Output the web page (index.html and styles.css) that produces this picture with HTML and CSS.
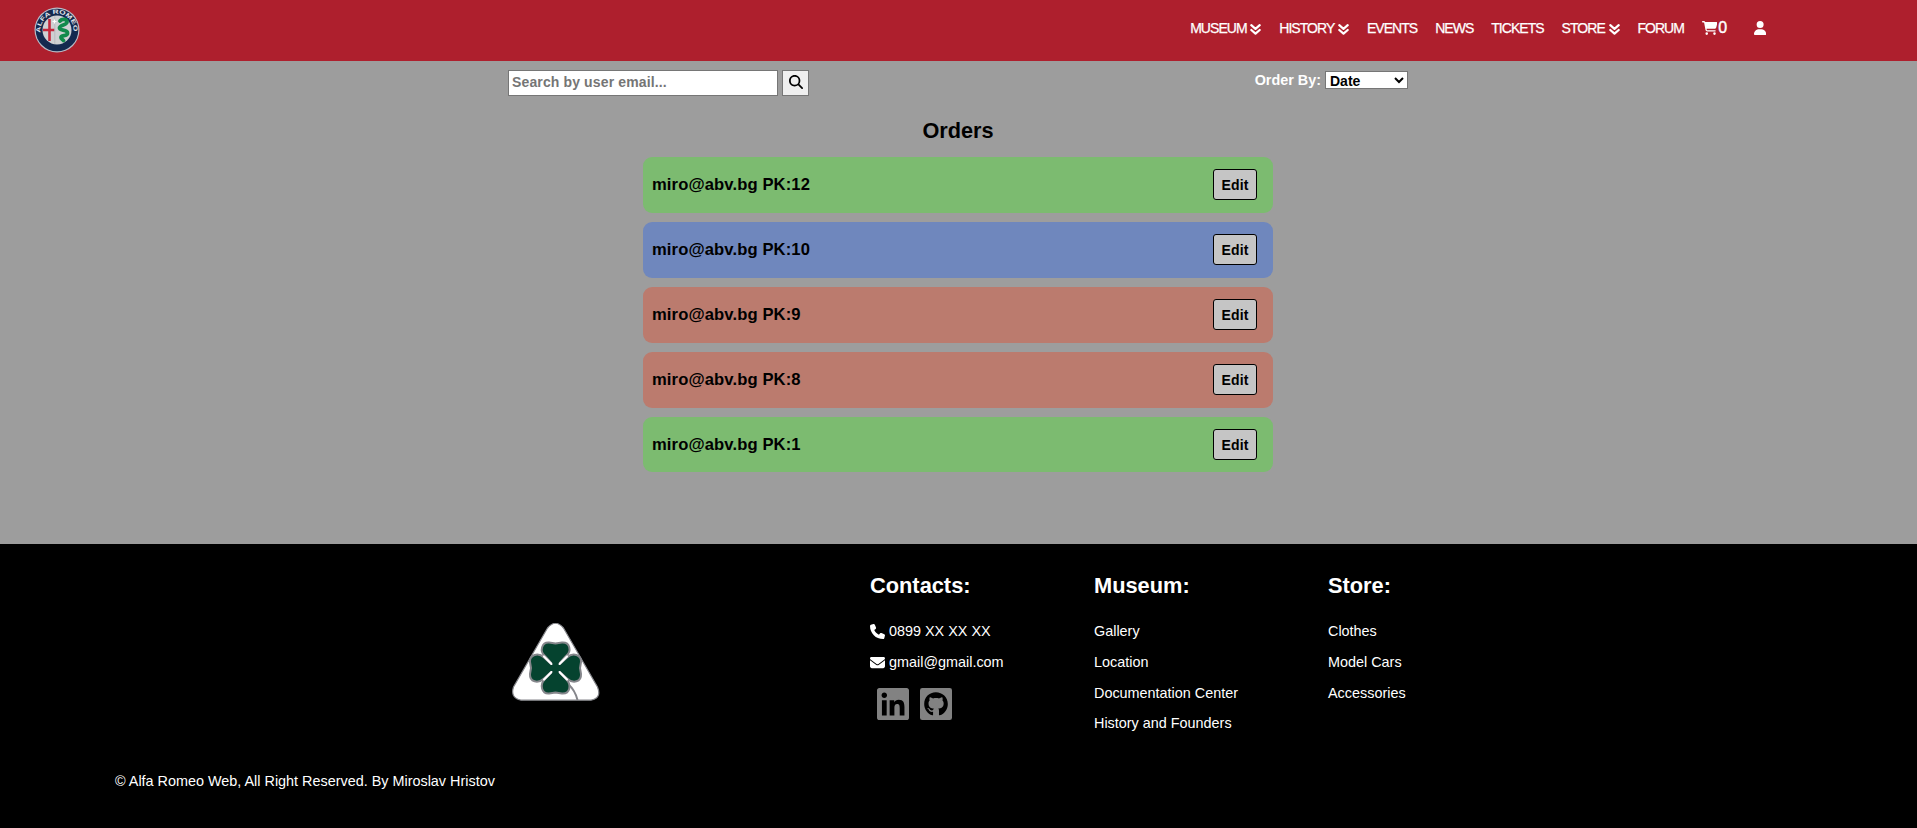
FILE: index.html
```html
<!DOCTYPE html>
<html lang="en">
<head>
<meta charset="utf-8">
<title>Orders</title>
<link rel="stylesheet" href="styles.css">
</head>
<body>
<svg class="defs" width="0" height="0">
  <symbol id="angles" viewBox="0 0 11 11"><path d="M1.3 1.2 5.5 4.8 9.7 1.2M1.3 6 5.5 9.6 9.7 6" fill="none" stroke="currentColor" stroke-width="2.2" stroke-linecap="round" stroke-linejoin="round"/></symbol>
</svg>
<header class="header">
  <a class="logo">
    <svg viewBox="0 0 46 46" width="46" height="46">
      <defs><path id="ring" d="M7.2 28.5A16.6 16.6 0 1 1 38.8 28.5"/></defs>
      <circle cx="23" cy="23" r="22.5" fill="#b9bcc6"/>
      <circle cx="23" cy="23" r="21.3" fill="#14294f"/>
      <circle cx="23" cy="23" r="14.500" fill="#cfd0d3"/>
      <path d="M15.500 12v22M9 23h11.500" stroke="#c5273b" stroke-width="2.600"/>
      <path d="M20.800 9.200v27.600" stroke="#b4b6ba" stroke-width=".8"/>
      <path d="M18.500 14.500h4M20.500 12.500v4" stroke="#fff" stroke-width="1.200"/>
      <path d="M26 14c2-2.500 7-2 7 1s-7.500 3-7.500 6 8 1 8 5-6.500 1.500-6.500 4.500c0 1.500 1.500 1.500 2.500 3" fill="none" stroke="#118a4c" stroke-width="3.800" stroke-linecap="round"/>
      <text class="logo-text"><textPath href="#ring" startOffset="3" textLength="55" lengthAdjust="spacingAndGlyphs">ALFA ROMEO</textPath></text>
    </svg>
  </a>
  <nav class="nav">
    <a>MUSEUM<svg class="angles"><use href="#angles"/></svg></a>
    <a>HISTORY<svg class="angles"><use href="#angles"/></svg></a>
    <a>EVENTS</a>
    <a>NEWS</a>
    <a>TICKETS</a>
    <a>STORE<svg class="angles"><use href="#angles"/></svg></a>
    <a>FORUM</a>
    <a class="cart"><svg viewBox="0 0 576 512" width="15.500" height="14"><path fill="currentColor" d="M0 24C0 10.700 10.700 0 24 0H69.500c22 0 41.500 12.800 50.600 32h411c26.300 0 45.500 25 38.600 50.400l-41 152.300c-8.500 31.400-37 53.300-69.500 53.300H170.700l5.400 28.500c2.200 11.300 12.100 19.500 23.600 19.500H488c13.300 0 24 10.700 24 24s-10.700 24-24 24H199.700c-34.600 0-64.300-24.600-70.700-58.500L77.400 54.500c-.7-3.800-4-6.500-7.900-6.500H24C10.700 48 0 37.300 0 24zM128 464a48 48 0 1 1 96 0 48 48 0 1 1 -96 0zm336-48a48 48 0 1 1 0 96 48 48 0 1 1 0-96z"/></svg><span>0</span></a>
    <a class="user"><svg viewBox="0 0 448 512" width="12.250" height="14"><path fill="currentColor" d="M224 256A128 128 0 1 0 224 0a128 128 0 1 0 0 256zm-45.700 48C79.800 304 0 383.800 0 482.300C0 498.700 13.300 512 29.700 512H418.300c16.400 0 29.700-13.300 29.700-29.700C448 383.800 368.200 304 269.700 304H178.300z"/></svg></a>
  </nav>
</header>

<main class="main">
  <div class="tools">
    <form class="search">
      <input class="search-input" type="text" placeholder="Search by user email...">
      <button class="search-button" type="button"><svg viewBox="0 0 512 512" width="14" height="14"><path d="M416 208c0 45.900-14.900 88.300-40 122.700L502.600 457.400c12.500 12.500 12.500 32.800 0 45.300s-32.800 12.500-45.300 0L330.700 376c-34.400 25.200-76.800 40-122.700 40C93.100 416 0 322.900 0 208S93.100 0 208 0S416 93.100 416 208zM208 352a144 144 0 1 0 0-288 144 144 0 1 0 0 288z"/></svg></button>
    </form>
    <label class="order-by">Order By:
      <select class="order-select"><option>Date</option></select>
    </label>
  </div>
  <h2 class="title">Orders</h2>
  <ul class="orders">
    <li class="order done"><span>miro@abv.bg PK:12</span><button class="edit">Edit</button></li>
    <li class="order sent"><span>miro@abv.bg PK:10</span><button class="edit">Edit</button></li>
    <li class="order pending"><span>miro@abv.bg PK:9</span><button class="edit">Edit</button></li>
    <li class="order pending"><span>miro@abv.bg PK:8</span><button class="edit">Edit</button></li>
    <li class="order done"><span>miro@abv.bg PK:1</span><button class="edit">Edit</button></li>
  </ul>
</main>

<footer class="footer">
  <div class="columns">
    <svg class="clover" viewBox="0 0 88 78" width="88" height="78">
      <path d="M35.500 5Q43.500-4.500 51.500 5L85.500 64Q90 75 79 77.200H9Q-2 75 1.500 64Z" fill="#fff" stroke="#85868b" stroke-width="1.200"/>
      <path d="M56 61Q63 67 65.500 77" fill="none" stroke="#85868b" stroke-width="2"/>
      <g fill="#05432f" stroke="#85868b" stroke-width="2" stroke-linejoin="round">
        <path d="M43.500 45 33 33C27 28 30 19 37 19.500L43.500 20.500 50 19.500C58 19 60 28 54 33Z"/>
        <path d="M43.500 45 33 56C27 62 30 71 37 70.500L43.500 69.500 50 70.500C58 71 60 62 54 56Z"/>
        <path d="M43.500 45 32 34.500C26 29 17.500 32 18 39L19 45 18 51C17.500 59 26 61 32 55.500Z"/>
        <path d="M43.500 45 55 34.500C61 29 69.500 32 69 39L68 45 69 51C69.500 59 61 61 55 55.500Z"/>
      </g>
      <path d="M32 33.500 39.500 41M55 33.500 47.500 41M32 56.500 39.500 49M55 56.500 47.500 49" stroke="#fff" stroke-width="2.200" stroke-linecap="round"/>
      <path d="M43.500 39v12M38 45h11" stroke="#05432f" stroke-width="6"/>
    </svg>
    <section class="column contacts">
      <h3>Contacts:</h3>
      <p><svg viewBox="0 0 512 512" width="15" height="15"><path fill="currentColor" d="M164.900 24.600c-7.700-18.600-28-28.500-47.400-23.200l-88 24C12.100 30.200 0 46 0 64C0 311.400 200.600 512 448 512c18 0 33.800-12.100 38.600-29.500l24-88c5.300-19.400-4.600-39.700-23.200-47.400l-96-40c-16.300-6.800-35.200-2.100-46.300 11.600L304.700 368C234.300 334.700 177.300 277.700 144 207.300L193.300 167c13.700-11.200 18.400-30 11.600-46.300l-40-96z"/></svg> 0899 XX XX XX</p>
      <p><svg viewBox="0 0 512 512" width="15" height="15"><path fill="currentColor" d="M48 64C21.500 64 0 85.500 0 112c0 15.100 7.100 29.300 19.200 38.400L236.800 313.600c11.400 8.500 27 8.500 38.400 0L492.800 150.400c12.100-9.100 19.200-23.300 19.200-38.400c0-26.500-21.500-48-48-48H48zM0 176V384c0 35.300 28.700 64 64 64H448c35.300 0 64-28.700 64-64V176L294.400 339.200c-22.800 17.100-54 17.100-76.800 0L0 176z"/></svg> gmail@gmail.com</p>
      <div class="social">
        <svg viewBox="0 32 448 448" width="32" height="32"><path fill="currentColor" d="M416 32H31.900C14.300 32 0 46.500 0 64.300v383.400C0 465.500 14.300 480 31.900 480H416c17.600 0 32-14.500 32-32.300V64.300c0-17.800-14.400-32.300-32-32.300zM135.400 416H69V202.200h66.500V416zm-33.200-243c-21.300 0-38.500-17.300-38.500-38.500S80.900 96 102.200 96c21.200 0 38.500 17.300 38.500 38.500 0 21.300-17.200 38.500-38.500 38.500zm282.100 243h-66.400V312c0-24.800-.5-56.700-34.500-56.700-34.600 0-39.900 27-39.900 54.900V416h-66.400V202.200h63.700v29.200h.9c8.900-16.800 30.600-34.500 62.900-34.500 67.200 0 79.700 44.300 79.700 101.900V416z"/></svg>
        <svg viewBox="0 0 32 32" width="32" height="32"><rect width="32" height="32" rx="2.300" fill="currentColor"/><path transform="translate(4.200 3.900) scale(.0476)" d="M244.800 8C106.100 8 0 113.300 0 252c0 110.900 69.800 205.800 169.500 239.200 12.800 2.300 17.300-5.600 17.300-12.100 0-6.200-.3-40.400-.3-61.400 0 0-70 15-84.700-29.800 0 0-11.400-29.100-27.800-36.600 0 0-22.900-15.700 1.600-15.400 0 0 24.900 2 38.600 25.800 21.900 38.600 58.600 27.500 72.900 20.900 2.300-16 8.800-27.100 16-33.700-55.900-6.200-112.300-14.300-112.300-110.500 0-27.500 7.600-41.300 23.600-58.900-2.600-6.500-11.100-33.300 2.600-67.900 20.900-6.500 69 27 69 27 20-5.600 41.500-8.500 62.800-8.500s42.800 2.900 62.800 8.500c0 0 48.100-33.600 69-27 13.700 34.700 5.200 61.400 2.600 67.900 16 17.700 25.800 31.500 25.800 58.900 0 96.500-58.900 104.200-114.800 110.500 9.200 7.900 17 22.900 17 46.400 0 33.700-.3 75.400-.3 83.600 0 6.500 4.600 14.400 17.300 12.100C428.200 457.800 496 362.900 496 252 496 113.300 383.500 8 244.800 8z"/></svg>
      </div>
    </section>
    <section class="column museum">
      <h3>Museum:</h3>
      <p>Gallery</p><p>Location</p><p>Documentation Center</p><p>History and Founders</p>
    </section>
    <section class="column">
      <h3>Store:</h3>
      <p>Clothes</p><p>Model Cars</p><p>Accessories</p>
    </section>
  </div>
  <p class="copyright">© Alfa Romeo Web, All Right Reserved. By Miroslav Hristov</p>
</footer>
</body>
</html>
```
FILE: styles.css
```css
* { box-sizing: border-box; margin: 0; padding: 0; }
body {
  display: flex;
  flex-direction: column;
  height: 828px;
  overflow: hidden;
  background: #000;
  font-family: "Liberation Sans", Arial, sans-serif;
}
.defs { display: none; }
.header {
  display: flex;
  justify-content: space-between;
  height: 61px;
  padding: 6px 151px 0 34px;
  background: #ae1f2d;
  color: #fff;
}
.logo { padding-top: .5px; }
.logo svg { display: block; }
.logo-text { font-size: 6px; font-weight: bold; fill: #e4e6ec; }
.nav {
  display: flex;
  gap: 17.9px;
  height: 16px;
  margin-top: 14px;
  font-size: 14px;
  line-height: 16px;
  letter-spacing: -.95px;
  -webkit-text-stroke: .25px #fff;
}
.nav a { display: flex; align-items: center; white-space: nowrap; }
.angles { width: 11px; height: 11px; margin-left: 3.7px; margin-top: 2px; }
.cart span { font-size: 16px; margin-left: 1px; letter-spacing: 0; -webkit-text-stroke: .4px #fff; }
.user { margin-left: 8.6px; }
.main { height: 483px; background: #9d9d9d; padding: 9px 1px 0 0; }
.tools {
  display: flex;
  justify-content: space-between;
  align-items: flex-start;
  width: 900px;
  height: 26px;
  margin: 0 auto;
}
.search { display: flex; gap: 4px; }
.search-input {
  width: 270px;
  height: 26px;
  padding: 0 3px 2px;
  border: 1px solid #767676;
  background: #fff;
  font: bold 14px "Liberation Sans", Arial, sans-serif;
  letter-spacing: .13px;
}
.search-input::placeholder { color: #757575; }
.search-button {
  display: flex;
  align-items: center;
  justify-content: center;
  width: 27px;
  height: 26px;
  padding-bottom: 2px;
  border: 1px solid #767676;
  background: #efefef;
}
.order-by {
  display: flex;
  align-items: center;
  gap: 4px;
  margin-top: 1px;
  color: #fff;
  font-size: 14.4px;
  font-weight: bold;
}
.order-select {
  width: 83px;
  height: 18px;
  padding-bottom: 1px;
  border: 1px solid #767676;
  border-radius: 0;
  background: #fff;
  color: #000;
  font: bold 14px "Liberation Sans", Arial, sans-serif;
}
.title {
  margin-top: 22px;
  font-size: 21.7px;
  line-height: 26px;
  text-align: center;
}
.orders {
  display: flex;
  flex-direction: column;
  gap: 9px;
  width: 630px;
  margin: 13px auto 0;
  list-style: none;
}
.order {
  display: flex;
  align-items: center;
  justify-content: space-between;
  height: 56px;
  padding: 0 16px 0 9px;
  border-radius: 9px;
  font-size: 16.6px;
  font-weight: bold;
  letter-spacing: .12px;
}
.order:last-child { height: 55px; }
.done { background: #7cbb70; }
.sent { background: #6f87bd; }
.pending { background: #bb7b6e; }
.edit {
  width: 44px;
  height: 31px;
  margin-bottom: 1px;
  border: 1px solid #000;
  border-radius: 3px;
  background: #c5c5c5;
  font: bold 14px "Liberation Sans", Arial, sans-serif;
  letter-spacing: .1px;
}
.order:last-child .edit { margin-bottom: 0; }
.footer { flex: 1; background: #000; color: #fff; font-size: 14.4px; }
.columns { display: flex; height: 222px; padding: 28px 0 0 512px; }
.clover { margin-top: 51px; margin-right: 270px; }
.column h3 { height: 27px; margin-bottom: 17px; font-size: 21.8px; line-height: 27px; }
.column p { display: flex; align-items: center; gap: 4px; height: 30.7px; white-space: nowrap; }
.contacts { width: 224px; }
.museum { width: 234px; }
.social { display: flex; gap: 11px; margin: 11px 0 0 7.3px; color: #828282; }
.social svg path:not([fill]) { fill: #000; }
.copyright { margin: 7px 0 0 115px; line-height: 16px; }
```
